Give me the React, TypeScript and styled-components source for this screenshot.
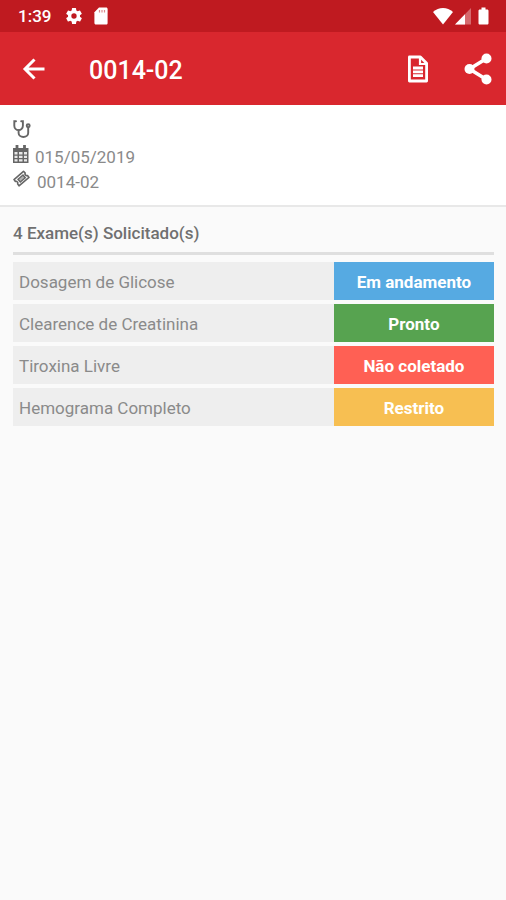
import React from "react";
import styled, { createGlobalStyle } from "styled-components";

const GlobalStyle = createGlobalStyle`
  *, *::before, *::after { box-sizing: border-box; }
  body {
    margin: 0;
    background: #fafafa;
    font-family: Roboto, "Liberation Sans", sans-serif;
    color: #8a8a8a;
  }
`;

const Screen = styled.div`
  min-height: 100vh;
  background: #fafafa;
`;

const StatusBar = styled.div`
  display: flex;
  align-items: center;
  height: 32px;
  padding: 0 12px 0 18px;
  background: #bf1a20;
  color: #fff;
`;

const Clock = styled.span`
  font-size: 17px;
  font-weight: 500;
  line-height: 32px;
  margin-right: 13px;
`;

const StatusGroup = styled.div<{ $end?: boolean }>`
  display: flex;
  align-items: center;
  gap: ${(p) => (p.$end ? 0 : 7)}px;
  margin-left: ${(p) => (p.$end ? "auto" : 0)};
`;

const AppBar = styled.header`
  display: flex;
  align-items: center;
  height: 73px;
  padding: 0 12px 0 18px;
  background: #d9272e;
  color: #fff;
`;

const IconButton = styled.button`
  display: flex;
  align-items: center;
  justify-content: center;
  width: 32px;
  height: 48px;
  padding: 0;
  border: 0;
  background: none;
  color: inherit;
  cursor: pointer;
`;

const Title = styled.h1`
  flex: 1;
  margin: 0 0 0 39px;
  padding-top: 4px;
  font-size: 25px;
  font-weight: 500;
  line-height: 32px;
`;

const Actions = styled.div`
  display: flex;
  gap: 28px;
`;

const Summary = styled.section`
  height: 102px;
  padding: 15px 13px 0;
  background: #fff;
  border-bottom: 2px solid #e8e8e8;
`;

const SummaryLine = styled.div`
  display: flex;
  align-items: flex-start;
  gap: 5px;
  height: 25px;
  font-size: 17px;
  line-height: 24px;
`;

const SummaryIcon = styled.svg`
  height: 18px;
  flex: none;
  color: #666;
`;

const Content = styled.main`
  padding: 12px 12px 12px 13px;
`;

const Heading = styled.h2`
  margin: 0;
  padding: 2px 0 7px;
  border-bottom: 3px solid #dfdfdf;
  font-size: 17px;
  font-weight: 500;
  line-height: 24px;
  color: #707070;
`;

const ExamTable = styled.table`
  width: 100%;
  margin-top: 3px;
  border-collapse: separate;
  border-spacing: 0 4px;
  table-layout: fixed;
`;

const ExamName = styled.th`
  height: 38px;
  padding: 2px 6px 0;
  background: #eee;
  font-size: 17px;
  font-weight: 400;
  line-height: 24px;
  text-align: left;
`;

const ExamStatus = styled.td<{ $color: string }>`
  width: 33.3%;
  padding: 2px 0 0;
  background: ${(p) => p.$color};
  color: #fff;
  font-size: 17px;
  font-weight: 700;
  line-height: 24px;
  text-align: center;
`;

const exams = [
  { name: "Dosagem de Glicose", status: "Em andamento", color: "#56aae2" },
  { name: "Clearence de Creatinina", status: "Pronto", color: "#57a350" },
  { name: "Tiroxina Livre", status: "Não coletado", color: "#ff6054" },
  { name: "Hemograma Completo", status: "Restrito", color: "#f7bf52" },
];

const GearIcon = () => (
  <svg width="20" height="20" viewBox="0 0 24 24" fill="currentColor" aria-hidden="true">
    <path d="M19.14 12.94c.04-.3.06-.61.06-.94s-.02-.64-.07-.94l2.03-1.58a.49.49 0 0 0 .12-.61l-1.92-3.32a.49.49 0 0 0-.59-.22l-2.39.96a7 7 0 0 0-1.62-.94l-.36-2.54a.48.48 0 0 0-.48-.41h-3.84a.48.48 0 0 0-.47.41l-.36 2.54c-.59.24-1.13.57-1.62.94l-2.39-.96a.49.49 0 0 0-.59.22L2.74 8.87a.48.48 0 0 0 .12.61l2.03 1.58a6 6 0 0 0 0 1.88l-2.03 1.58a.49.49 0 0 0-.12.61l1.92 3.32c.12.22.37.29.59.22l2.39-.96c.5.38 1.03.7 1.62.94l.36 2.54c.05.24.24.41.48.41h3.84c.24 0 .44-.17.47-.41l.36-2.54a7 7 0 0 0 1.62-.94l2.39.96c.22.08.47 0 .59-.22l1.92-3.32a.48.48 0 0 0-.12-.61zM12 15.2a3.2 3.2 0 1 1 0-6.4 3.2 3.2 0 0 1 0 6.4z" />
  </svg>
);

const SdCardIcon = () => (
  <svg width="20" height="20" viewBox="0 0 20 20" fill="currentColor" aria-hidden="true">
    <path d="M8 1.5h7c1 0 1.6.6 1.6 1.5v14c0 1-.6 1.5-1.6 1.5H5c-1 0-1.6-.6-1.6-1.5V6.2z" />
    <path d="M8.5 4v2.5M11 4v2.5M13.5 4v2.5" stroke="#bf1a20" strokeWidth="1.2" opacity=".5" />
  </svg>
);

const WifiIcon = () => (
  <svg width="22" height="20" viewBox="0 0 22 20" fill="currentColor" aria-hidden="true">
    <path d="M11 18.5 1 6C4 3.3 7.300 2 11 2s7 1.300 10 4z" />
  </svg>
);

const SignalIcon = () => (
  <svg width="18" height="20" viewBox="0 0 18 20" fill="currentColor" aria-hidden="true">
    <path d="M1 18.5 17 2v16.5z" opacity=".35" />
    <path d="M1 18.5 11 8.2v10.3z" />
  </svg>
);

const BatteryIcon = () => (
  <svg width="22" height="20" viewBox="0 0 22 20" fill="currentColor" aria-hidden="true">
    <path d="M9.5 1.5h4v2h1.7c.7 0 1.3.6 1.3 1.3v12.4c0 .7-.6 1.3-1.3 1.3H7.8c-.7 0-1.3-.6-1.3-1.3V4.8c0-.7.6-1.3 1.3-1.3h1.7z" />
  </svg>
);

const BackIcon = () => (
  <svg width="26" height="26" viewBox="0 0 26 26" fill="none" stroke="currentColor" strokeWidth="3" aria-hidden="true">
    <path d="M23.5 13H5M13.500 3.500 4 13l9.500 9.500" />
  </svg>
);

const DocumentIcon = () => (
  <svg width="24" height="28" viewBox="0 0 24 28" fill="none" stroke="currentColor" strokeWidth="2.8" aria-hidden="true">
    <path d="M3.4 2h11l6.200 6.200V26H3.400z" strokeLinejoin="round" />
    <path d="M14 2v7h6.500" strokeWidth="2.2" />
    <path d="M7 13h10M7 16.800h10M7 20.600h10" />
  </svg>
);

const ShareIcon = () => (
  <svg width="32" height="34" viewBox="0 0 32 34" fill="currentColor" aria-hidden="true">
    <path d="M24.5 6.500 7.500 17l17 10.500" fill="none" stroke="currentColor" strokeWidth="3.6" />
    <circle cx="24.5" cy="6.5" r="5" />
    <circle cx="7.5" cy="17" r="5" />
    <circle cx="24.5" cy="27.5" r="5" />
  </svg>
);

const StethoscopeIcon = () => (
  <SummaryIcon width="18" viewBox="0 0 18 18" fill="none" stroke="currentColor" strokeWidth="1.9" strokeLinecap="round" aria-hidden="true">
    <path d="M3 1.200H1.300v4.600a4.300 4.300 0 0 0 8.600 0V1.200H8.200" />
    <path d="M5.600 10.300v2.700a4.800 4 0 0 0 9.600 0V7.500" />
    <circle cx="15.2" cy="5.8" r="1.5" />
  </SummaryIcon>
);

const CalendarIcon = () => (
  <SummaryIcon width="17" viewBox="0 0 17 18" aria-hidden="true">
    <path d="M0 3h15.500v15H0z" fill="currentColor" />
    <path d="M4 0v5M11.500 0v5" stroke="currentColor" strokeWidth="2.8" />
    <path
      d="M1.500 7h3v2.600h-3zM6 7h3.500v2.600H6zM11 7h3v2.600h-3zM1.500 10.700h3v2.400h-3zM6 10.700h3.500v2.400H6zM11 10.700h3v2.400h-3zM1.500 14.200h3v2.300h-3zM6 14.200h3.500v2.300H6zM11 14.200h3v2.300h-3z"
      fill="#fff"
      fillOpacity=".85"
    />
  </SummaryIcon>
);

const TicketIcon = () => (
  <SummaryIcon width="19" viewBox="0 0 19 18" fill="none" stroke="currentColor" aria-hidden="true">
    <path d="M10.500 1.300 1 9.600l1.400 1.800a1.800 1.800 0 0 1 2.200 2.500L6 15.800 16 7.400l-1.500-1.900A1.800 1.800 0 0 1 12.200 3z" strokeWidth="1.6" strokeLinejoin="round" />
    <path d="M10 5 5 9.300l2.300 2.700 5-4.300z" strokeWidth="1.4" fill="currentColor" fillOpacity=".5" />
  </SummaryIcon>
);

export default function App() {
  return (
    <Screen>
      <GlobalStyle />
      <StatusBar>
        <Clock>1:39</Clock>
        <StatusGroup>
          <GearIcon />
          <SdCardIcon />
        </StatusGroup>
        <StatusGroup $end>
          <WifiIcon />
          <SignalIcon />
          <BatteryIcon />
        </StatusGroup>
      </StatusBar>
      <AppBar>
        <IconButton type="button" aria-label="Voltar">
          <BackIcon />
        </IconButton>
        <Title>0014-02</Title>
        <Actions>
          <IconButton type="button" aria-label="Laudo">
            <DocumentIcon />
          </IconButton>
          <IconButton type="button" aria-label="Compartilhar">
            <ShareIcon />
          </IconButton>
        </Actions>
      </AppBar>
      <Summary>
        <SummaryLine>
          <StethoscopeIcon />
        </SummaryLine>
        <SummaryLine>
          <CalendarIcon />
          <span>015/05/2019</span>
        </SummaryLine>
        <SummaryLine>
          <TicketIcon />
          <span>0014-02</span>
        </SummaryLine>
      </Summary>
      <Content>
        <Heading>4 Exame(s) Solicitado(s)</Heading>
        <ExamTable aria-label="Exames solicitados">
          <tbody>
            {exams.map((exam) => (
              <tr key={exam.name}>
                <ExamName scope="row">{exam.name}</ExamName>
                <ExamStatus $color={exam.color}>{exam.status}</ExamStatus>
              </tr>
            ))}
          </tbody>
        </ExamTable>
      </Content>
    </Screen>
  );
}
